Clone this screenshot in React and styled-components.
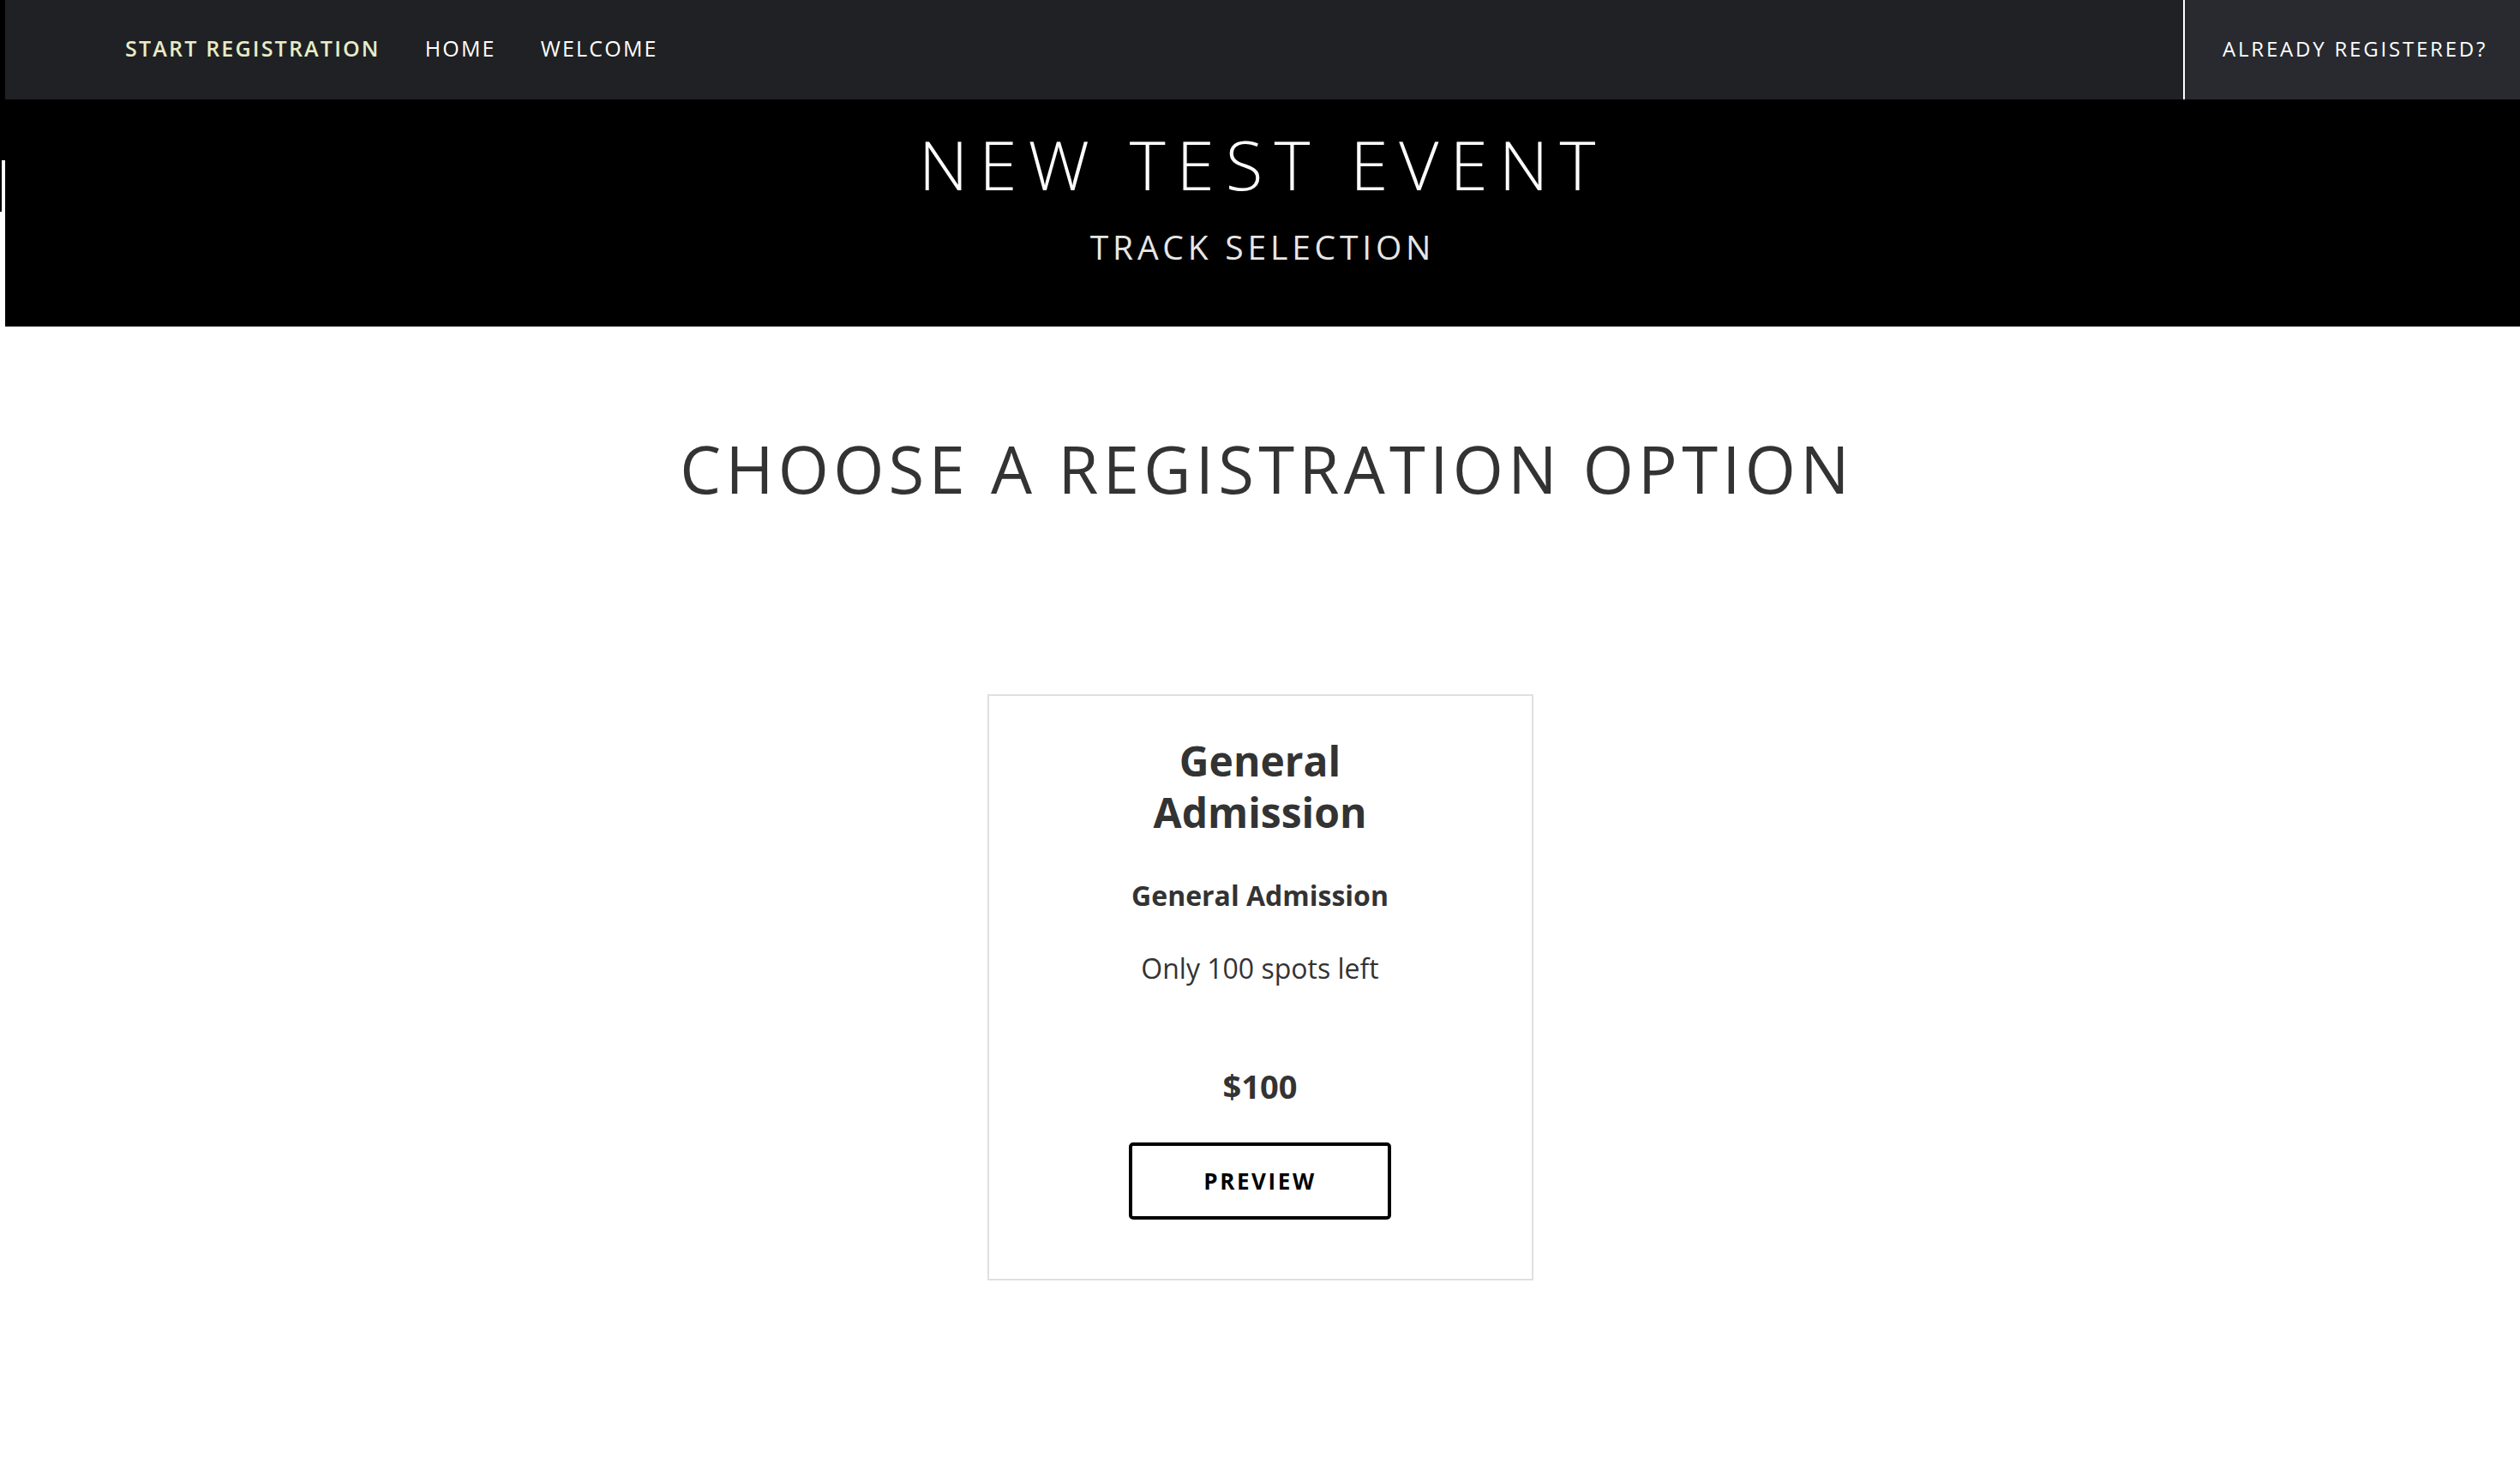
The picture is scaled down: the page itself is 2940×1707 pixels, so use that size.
import styled, { createGlobalStyle } from "styled-components";

const GlobalStyle = createGlobalStyle`
  html, body {
    margin: 0;
    padding: 0;
    background: #fff;
  }
  body {
    font-family: "Open Sans", "Noto Sans", sans-serif;
  }
  * {
    box-sizing: border-box;
  }
`;

const Page = styled.div`
  display: flex;
  min-height: 1707px;
  background: #fff;
`;

const Gutter = styled.div`
  width: 6px;
  flex-shrink: 0;
  background:
    linear-gradient(#000, #000) 0 0 / 6px 187px no-repeat,
    linear-gradient(to right, #000 2px, transparent 2px) 0 187px / 6px 60px no-repeat,
    #fff;
`;

const Main = styled.div`
  flex: 1;
  display: flex;
  flex-direction: column;
`;

const NavBar = styled.nav`
  display: flex;
  align-items: stretch;
  height: 116px;
  background: #1f2124;
`;

const NavLinks = styled.div`
  flex: 1;
  display: flex;
  align-items: center;
  gap: 52px;
  padding: 0 0 4px 140px;
`;

const NavLink = styled.a`
  font-size: 25px;
  font-weight: ${({ $active }) => ($active ? 600 : 500)};
  letter-spacing: 2.2px;
  text-transform: uppercase;
  color: ${({ $active }) => ($active ? "#e9ecc6" : "#fff")};
  text-decoration: none;
`;

const LoginBox = styled.div`
  display: flex;
  align-items: center;
  padding: 0 0 4px 44px;
  background: #282a2f;
  border-left: 2px solid #fff;
  width: 393px;
  font-size: 24px;
  font-weight: 400;
  letter-spacing: 2.8px;
  color: #fff;
  text-transform: uppercase;
  white-space: nowrap;
`;

const Hero = styled.header`
  background: #000;
  padding: 35px 0 74px;
  display: flex;
  flex-direction: column;
  align-items: center;
`;

const EventTitle = styled.h1`
  margin: 0;
  font-size: 80px;
  line-height: 80px;
  font-weight: 300;
  letter-spacing: 13px;
  color: #fff;
`;

const EventSub = styled.h2`
  margin: 38px 0 0;
  font-size: 39px;
  line-height: 38px;
  font-weight: 500;
  letter-spacing: 4.8px;
  color: #e6e6e6;
`;

const Content = styled.section`
  display: flex;
  flex-direction: column;
  align-items: center;
  padding-top: 128px;
`;

const SectionTitle = styled.h2`
  margin: 0 0 0 10px;
  font-size: 76px;
  line-height: 76px;
  font-weight: 500;
  letter-spacing: 5.3px;
  color: #333;
`;

const Cards = styled.div`
  display: flex;
  justify-content: center;
  margin-top: 225px;
  margin-left: -6px;
`;

const Card = styled.div`
  width: 637px;
  border: 2px solid #e0e0e0;
  padding: 46px 100px 69px;
  display: flex;
  flex-direction: column;
  align-items: center;
  text-align: center;
  color: #333;
`;

const CardTitle = styled.h3`
  margin: 0;
  font-size: 48px;
  line-height: 60px;
  font-weight: 700;
`;

const CardSubtitle = styled.h4`
  margin: 52px 0 0;
  font-size: 32px;
  line-height: 30px;
  font-weight: 700;
`;

const CardNote = styled.p`
  margin: 55px 0 0;
  font-size: 32px;
  line-height: 30px;
  font-weight: 400;
`;

const Price = styled.div`
  margin-top: 103px;
  font-size: 38px;
  line-height: 38px;
  font-weight: 700;
`;

const OutlineButton = styled.button`
  margin-top: 47px;
  width: 306px;
  height: 90px;
  border: 4px solid #000;
  border-radius: 5px;
  background: #fff;
  color: #000;
  font-family: inherit;
  font-size: 26px;
  font-weight: 700;
  letter-spacing: 2.6px;
  text-transform: uppercase;
  cursor: pointer;
`;

const tracks = [
  {
    id: 1,
    title: "General Admission",
    subtitle: "General Admission",
    note: "Only 100 spots left",
    price: "$100",
  },
];

const App = () => {
  return (
    <>
      <GlobalStyle />
      <Page>
        <Gutter />
        <Main>
          <NavBar>
            <NavLinks>
              <NavLink href="#" $active>
                Start Registration
              </NavLink>
              <NavLink href="#">Home</NavLink>
              <NavLink href="#">Welcome</NavLink>
            </NavLinks>
            <LoginBox>Already Registered?</LoginBox>
          </NavBar>
          <Hero>
            <EventTitle>NEW TEST EVENT</EventTitle>
            <EventSub>TRACK SELECTION</EventSub>
          </Hero>
          <Content>
            <SectionTitle>CHOOSE A REGISTRATION OPTION</SectionTitle>
            <Cards>
              {tracks.map((t) => (
                <Card key={t.id}>
                  <CardTitle>{t.title}</CardTitle>
                  <CardSubtitle>{t.subtitle}</CardSubtitle>
                  <CardNote>{t.note}</CardNote>
                  <Price>{t.price}</Price>
                  <OutlineButton>Preview</OutlineButton>
                </Card>
              ))}
            </Cards>
          </Content>
        </Main>
      </Page>
    </>
  );
};

export default App;
